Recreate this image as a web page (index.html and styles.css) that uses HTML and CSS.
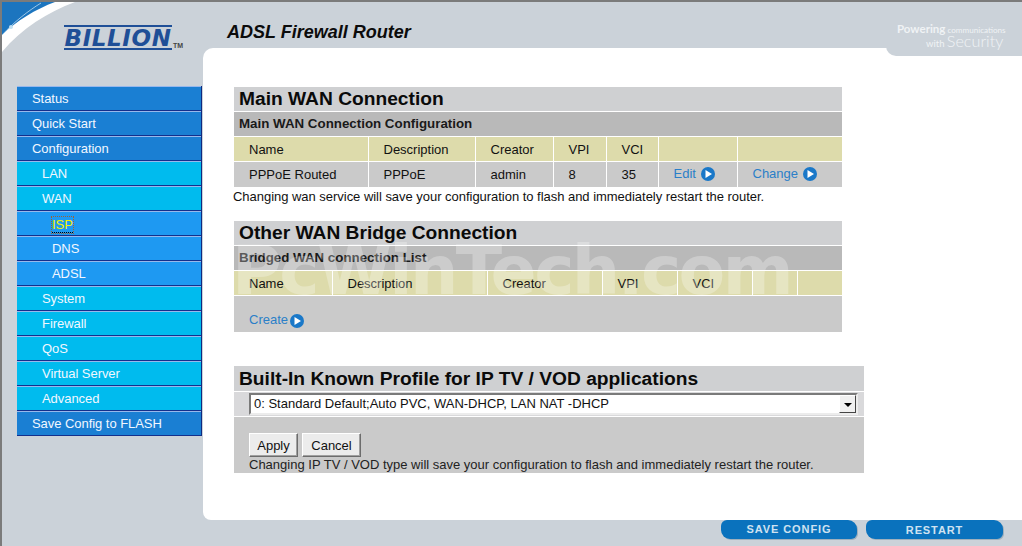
FILE: index.html
```html
<!DOCTYPE html>
<html lang="en">
<head>
<meta charset="utf-8">
<title>ADSL Firewall Router</title>
<link rel="stylesheet" href="styles.css">
</head>
<body>
<div class="page">
  <header class="header">
    <svg class="swoosh" width="76" height="52" viewBox="0 0 76 52" aria-hidden="true">
      <path d="M0 0H73C46 10 20 26 0 50Z" fill="#fff"/>
      <path d="M0 0H53C34 7 14 19 0 33Z" fill="#1c75bf"/>
      <path d="M0 33C12 20 26 9 39 1" fill="none" stroke="#9cc6e6" stroke-width="1"/>
      <circle cx="9" cy="25" r="2" fill="#bfe0f2"/>
    </svg>
    <div class="logo"><span class="logo-word">BILLION</span><span class="logo-tm">TM</span></div>
    <h1 class="product">ADSL Firewall Router</h1>
    <div class="tagline">
      <div class="tag-top"><b>Powering</b> communications</div>
      <div class="tag-bottom"><small>with</small> Security</div>
    </div>
  </header>
  <div class="body">
    <nav class="nav">
      <a class="item l1">Status</a>
      <a class="item l1">Quick Start</a>
      <a class="item l1">Configuration</a>
      <a class="item l2">LAN</a>
      <a class="item l2">WAN</a>
      <a class="item l3"><span class="current">ISP</span></a>
      <a class="item l3">DNS</a>
      <a class="item l3">ADSL</a>
      <a class="item l2">System</a>
      <a class="item l2">Firewall</a>
      <a class="item l2">QoS</a>
      <a class="item l2">Virtual Server</a>
      <a class="item l2">Advanced</a>
      <a class="item l1">Save Config to FLASH</a>
    </nav>
    <main class="panel">
      <section class="block">
        <h2 class="title">Main WAN Connection</h2>
        <h3 class="sub">Main WAN Connection Configuration</h3>
        <table class="grid grid-main">
          <colgroup><col class="m1"><col class="m2"><col class="m3"><col class="m4"><col class="m5"><col class="m6"><col class="m7"></colgroup>
          <tr class="head"><td>Name</td><td>Description</td><td>Creator</td><td>VPI</td><td>VCI</td><td></td><td></td></tr>
          <tr class="data"><td>PPPoE Routed</td><td>PPPoE</td><td>admin</td><td>8</td><td>35</td>
            <td class="act"><a class="link">Edit<svg class="go" viewBox="0 0 14 14"><circle cx="7" cy="7" r="7"/><path d="M4.5 3 11 7 4.5 11Z"/></svg></a></td>
            <td class="act"><a class="link">Change<svg class="go" viewBox="0 0 14 14"><circle cx="7" cy="7" r="7"/><path d="M4.5 3 11 7 4.5 11Z"/></svg></a></td></tr>
        </table>
        <p class="note">Changing wan service will save your configuration to flash and immediately restart the router.</p>
      </section>
      <section class="block block-2">
        <h2 class="title">Other WAN Bridge Connection</h2>
        <h3 class="sub">Bridged WAN connection List</h3>
        <table class="grid grid-bridge">
          <colgroup><col class="b1"><col class="b2"><col class="b3"><col class="b4"><col class="b5"><col class="b6"><col class="b7"></colgroup>
          <tr class="head"><td>Name</td><td>Description</td><td>Creator</td><td>VPI</td><td>VCI</td><td></td><td></td></tr>
        </table>
        <div class="create"><a class="link">Create<svg class="go go-near" viewBox="0 0 14 14"><circle cx="7" cy="7" r="7"/><path d="M4.5 3 11 7 4.5 11Z"/></svg></a></div>
      </section>
      <section class="block block-3">
        <h2 class="title">Built-In Known Profile for IP TV / VOD applications</h2>
        <div class="select-row">
          <div class="select"><span class="select-text">0: Standard Default;Auto PVC, WAN-DHCP, LAN NAT -DHCP</span><span class="arrow"></span></div>
        </div>
        <div class="form">
          <div class="buttons"><button class="btn btn-apply" type="button">Apply</button><button class="btn btn-cancel" type="button">Cancel</button></div>
          <p class="form-note">Changing IP TV / VOD type will save your configuration to flash and immediately restart the router.</p>
        </div>
      </section>
      <div class="watermark">PcWinTech.com</div>
    </main>
  </div>
  <footer class="footer">
    <a class="pill pill-save">SAVE CONFIG</a>
    <a class="pill pill-restart">RESTART</a>
  </footer>
</div>
</body>
</html>
```
FILE: styles.css
```css
* { box-sizing: border-box; }
html, body { margin: 0; padding: 0; }
body { width: 1022px; height: 546px; overflow: hidden; font-family: "Liberation Sans", Arial, sans-serif; font-size: 13px; color: #111; }
.page { position: relative; width: 1022px; height: 546px; background: #cbd2d9; border-top: 2px solid #7b7b7b; border-left: 2px solid #7b7b7b; display: flex; flex-direction: column; }

.header { position: relative; height: 46px; flex: none; display: flex; align-items: flex-start; }
.swoosh { position: absolute; left: 0; top: 0; }
.logo { margin: 23px 0 0 62px; width: 163px; flex: none; display: flex; align-items: flex-end; }
.logo-word { display: block; font-family: "DejaVu Sans", sans-serif; font-weight: bold; font-style: italic; font-size: 23px; line-height: 20px; height: 25px; width: 108px; padding-top: 1px; letter-spacing: 0.6px; color: #1f4f97; border-top: 2px solid #1f4f97; border-bottom: 2px solid #1f4f97; white-space: nowrap; text-align: center; }
.logo-tm { font-size: 7px; line-height: 8px; font-weight: bold; color: #444; margin-left: 1px; }
.product { margin: 20px 0 0 0; font-size: 18px; line-height: 21px; font-weight: bold; font-style: italic; color: #0b0b0b; }
.tagline { position: absolute; right: 0; top: 0; width: 136px; height: 54px; background: #cbd2d9; border-bottom-left-radius: 10px; color: #f0f3f5; font-family: Lato, "Open Sans", sans-serif; z-index: 2; }
.tag-top { position: absolute; left: 11px; top: 21px; font-size: 8.1px; line-height: 11px; white-space: nowrap; font-weight: 400; }
.tag-top b { font-size: 11.5px; font-weight: 700; }
.tag-bottom { position: absolute; left: 40px; top: 29px; font-size: 16.2px; line-height: 20px; font-weight: 300; white-space: nowrap; word-spacing: -2px; }
.tag-bottom small { font-size: 9.5px; font-weight: 400; }

.body { display: flex; height: 472px; flex: none; }
.nav { width: 185px; margin: 38px 0 0 15px; flex: none; align-self: flex-start; display: flex; flex-direction: column; border-right: 1px solid #0f2a80; }
.item { display: block; height: 25px; line-height: 23px; color: #f2f7ff; font-size: 13px; letter-spacing: -0.05px; border-top: 1px solid #98b8ec; border-bottom: 1px solid #13308c; white-space: nowrap; }
.l1 { background: #1a7fd3; padding-left: 15px; }
.l2 { background: #00bbee; padding-left: 25px; }
.l3 { background: #1e99f2; padding-left: 35px; }
.current { display: inline-block; line-height: 15px; color: #f6f000; outline: 1px dotted #a06030; border-bottom: 1px dotted #000; vertical-align: middle; }

.panel { position: relative; margin-left: 1px; flex: 1; background: #fff; border-radius: 10px 0 0 8px; padding: 39px 0 0 31px; overflow: hidden; }
.block { width: 608px; }
.block-2 { margin-top: 15px; }
.block-3 { margin-top: 34px; width: 630px; }
.title { margin: 0 0 1px; height: 24px; padding-left: 5px; background: #cfd0d2; font-size: 19.2px; line-height: 24px; font-weight: bold; color: #0a0a0a; white-space: nowrap; }
.block-3 .title { height: 25px; line-height: 26px; }
.sub { margin: 0 0 1px; height: 24px; padding-left: 5px; background: #b9b9b9; font-size: 13.33px; line-height: 24px; font-weight: bold; color: #1a1a1a; white-space: nowrap; }

.grid { width: 608px; table-layout: fixed; border-collapse: collapse; font-size: 13px; }
.grid td { padding: 0 0 0 15px; border-left: 1px solid #fff; white-space: nowrap; }
.grid td:first-child { border-left: 0; }
.head td { height: 24px; background: #dddbab; }
.grid-main .head td { padding-top: 1px; }
.data td { height: 26px; background: #cacaca; border-top: 1px solid #fff; }
.m1 { width: 134px; } .m2 { width: 107px; } .m3 { width: 78px; } .m4 { width: 53px; } .m5 { width: 52px; } .m6 { width: 79px; } .m7 { width: 105px; }
.b1 { width: 98px; } .b2 { width: 155px; } .b3 { width: 115px; } .b4 { width: 75px; } .b5 { width: 75px; } .b6 { width: 45px; } .b7 { width: 45px; }
.grid .act { vertical-align: top; padding-top: 2px; }
.link { color: #2a7fc8; font-size: 13px; line-height: 20px; }
.go { width: 14px; height: 14px; vertical-align: -3px; margin-left: 5px; }
.go-near { margin-left: 2px; }
.go circle { fill: #1a78c8; }
.go path { fill: #fff; }
.note { margin: 1px 0 0 -1px; font-size: 13px; line-height: 18px; letter-spacing: -0.03px; white-space: nowrap; color: #111; }

.create { margin-top: 1px; height: 36px; background: #cacaca; padding: 14px 0 0 15px; line-height: 18px; }
.create .go { vertical-align: -4px; }

.select-row { margin-bottom: 1px; height: 24px; background: #d9d9db; padding: 1px 6px 0 15px; }
.select { display: flex; align-items: stretch; height: 22px; background: #fff; border: 2px solid; border-color: #7a7a7a #ececec #ececec #7a7a7a; }
.select-text { flex: 1; padding-left: 3px; line-height: 18px; font-size: 13px; color: #111; white-space: nowrap; }
.arrow { position: relative; width: 17px; background: #f0f0f0; border: 1px solid; border-color: #fff #444 #444 #fff; }
.arrow::after { content: ""; position: absolute; left: 4px; top: 7px; border: 4px solid transparent; border-top: 4px solid #000; border-bottom: 0; }

.form { height: 56px; background: #cacaca; padding: 16px 0 0 15px; }
.buttons { display: flex; gap: 4px; height: 24px; }
.btn { height: 24px; padding: 0; font-family: inherit; font-size: 13px; color: #111; background: #ececec; border: 1px solid; border-color: #fff #6c6c6c #6c6c6c #fff; box-shadow: inset -1px -1px 0 #a0a0a0; }
.btn-apply { width: 49px; }
.btn-cancel { width: 59px; }
.form-note { margin: 0; font-size: 13px; line-height: 16px; white-space: nowrap; color: #222; }

.watermark { position: absolute; left: 29px; top: 183px; font-family: "DejaVu Sans", sans-serif; font-weight: bold; font-size: 68px; line-height: 80px; letter-spacing: -2.6px; color: rgba(255,255,255,0.28); white-space: nowrap; pointer-events: none; }

.footer { flex: 1; display: flex; gap: 9px; padding-left: 719px; }
.pill { height: 19px; text-align: center; background: #0a72bd; color: #cfe2f1; font-size: 11px; font-weight: bold; line-height: 19px; letter-spacing: 0.9px; border-radius: 6px 9px 6px 9px; box-shadow: 1px 1px 0 #9fb0bd; }
.pill-save { width: 136px; }
.pill-restart { width: 137px; line-height: 21px; }
```
